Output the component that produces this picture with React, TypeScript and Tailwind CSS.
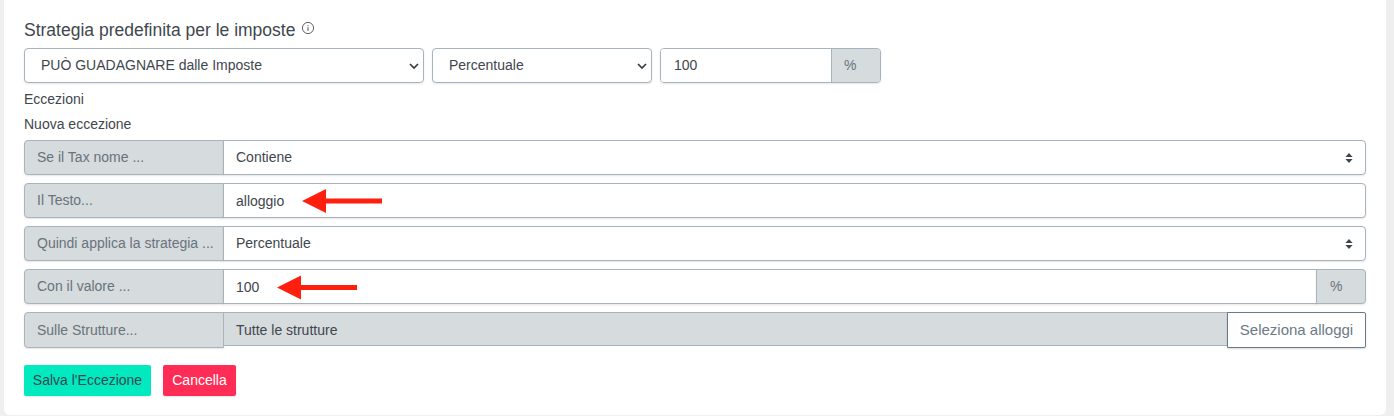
const sans = "font-['Liberation_Sans',Arial,sans-serif]";

function Chevron() {
  return (
    <svg viewBox="0 0 10 6" className="h-[6px] w-[10px]" aria-hidden>
      <path d="M1 1l4 4 4-4" fill="none" stroke="#343a40" strokeWidth="1.7" />
    </svg>
  );
}

function UpDown() {
  return (
    <svg viewBox="0 0 8 12" className="h-[12px] w-[8px]" aria-hidden>
      <path d="M4 1L7.6 5H0.4zM4 11L0.4 7h7.2z" fill="#3f464d" />
    </svg>
  );
}

function RedArrow({ className }: { className: string }) {
  return (
    <svg viewBox="0 0 80 24" className={className} aria-hidden>
      <path d="M0 12L24 0v9.5h56v5H24V24z" fill="#fe1f0e" />
    </svg>
  );
}

function TopSelect({ label, className }: { label: string; className: string }) {
  return (
    <div
      className={`flex h-[35px] items-center justify-between rounded-[4px] border border-[#a9b3bc] bg-white pl-[16px] pr-[4px] text-[14px] text-[#3f464d] shadow-[0_1px_2px_rgba(0,0,0,0.1)] ${className}`}
    >
      <span>{label}</span>
      <Chevron />
    </div>
  );
}

function Row({
  label,
  children,
  tall,
}: {
  label: string;
  children: React.ReactNode;
  tall?: boolean;
}) {
  return (
    <div className={`relative flex ${tall ? "h-[36px]" : "h-[35px]"}`}>
      <div className="flex w-[200px] shrink-0 items-center rounded-l-[4px] border border-[#a9b3bc] bg-[#d6dbde] pl-[12px] text-[14px] text-[#69737b] shadow-[0_1px_2px_rgba(0,0,0,0.1)]">
        {label}
      </div>
      {children}
    </div>
  );
}

function Field({ children }: { children: React.ReactNode }) {
  return (
    <div className="-ml-px flex min-w-0 flex-1 items-center justify-between rounded-r-[4px] border border-[#a9b3bc] bg-white pl-[12px] pr-[12px] text-[14px] text-[#3f464d] shadow-[0_1px_2px_rgba(0,0,0,0.1)]">
      {children}
    </div>
  );
}

export default function App() {
  return (
    <div className={`h-[416px] w-[1394px] overflow-hidden bg-[#efefef] pl-[4px] pr-[8px] ${sans}`}>
      <div className="h-[415px] rounded-b-[6px] bg-white pl-[20px] pr-[20px] pt-[20px]">
        <div className="flex h-[20px] items-center gap-[6px] text-[17.5px] text-[#3f464d]">
          <span>Strategia predefinita per le imposte</span>
          <svg viewBox="0 0 14 14" className="mb-[5px] h-[14px] w-[14px]" aria-hidden>
            <circle cx="7" cy="7" r="5.6" fill="none" stroke="#4b5259" strokeWidth="0.9" />
            <path d="M7 6.2v3.6M7 4.2v1" stroke="#4b5259" strokeWidth="1" />
          </svg>
        </div>

        <div className="mt-[8px] flex gap-[8px]">
          <TopSelect label="PUÒ GUADAGNARE dalle Imposte" className="w-[400px]" />
          <TopSelect label="Percentuale" className="w-[220px]" />
          <div className="flex h-[35px] w-[221px] overflow-hidden rounded-[4px] border border-[#a9b3bc] text-[14px] shadow-[0_1px_2px_rgba(0,0,0,0.1)]">
            <div className="flex flex-1 items-center bg-white pl-[13px] text-[#3f464d]">100</div>
            <div className="flex w-[49px] items-center border-l border-[#a9b3bc] bg-[#d6dbde] pl-[12px] text-[#69737b]">%</div>
          </div>
        </div>

        <div className="mt-[8px] h-[16px] text-[14px] leading-[16px] text-[#3f464d]">Eccezioni</div>
        <div className="mt-[9px] h-[16px] text-[14px] leading-[16px] text-[#3f464d]">Nuova eccezione</div>

        <div className="mt-[8px] flex flex-col gap-[8px]">
          <Row label="Se il Tax nome ...">
            <Field>
              <span>Contiene</span>
              <UpDown />
            </Field>
          </Row>
          <Row label="Il Testo...">
            <Field>
              <span className="pt-[2px]">alloggio</span>
            </Field>
            <RedArrow className="absolute left-[278px] top-[6px] h-[24px] w-[80px]" />
          </Row>
          <Row label="Quindi applica la strategia ...">
            <Field>
              <span>Percentuale</span>
              <UpDown />
            </Field>
          </Row>
          <Row label="Con il valore ...">
            <div className="-ml-px flex flex-1 items-center border border-[#a9b3bc] bg-white pl-[12px] pt-[2px] text-[14px] text-[#3f464d] shadow-[0_1px_2px_rgba(0,0,0,0.1)]">
              100
            </div>
            <div className="-ml-px flex w-[50px] items-center rounded-r-[4px] border border-[#a9b3bc] bg-[#d6dbde] pl-[13px] text-[14px] text-[#69737b] shadow-[0_1px_2px_rgba(0,0,0,0.1)]">
              %
            </div>
            <RedArrow className="absolute left-[253px] top-[6px] h-[25px] w-[80px]" />
          </Row>
          <Row label="Sulle Strutture..." tall>
            <div className="-ml-px flex h-[34px] flex-1 items-center border border-[#a9b3bc] bg-[#d6dbde] pl-[12px] pt-[2px] text-[14px] text-[#3f464d]">
              Tutte le strutture
            </div>
            <div className="-ml-px flex w-[139px] items-center justify-center rounded-r-[2px] border border-[#6c7a86] bg-white text-[15px] text-[#6c7a86] shadow-[0_1px_2px_rgba(0,0,0,0.15)]">
              Seleziona alloggi
            </div>
          </Row>
        </div>

        <div className="mt-[17px] flex gap-[12px]">
          <div className="flex h-[31px] w-[127px] items-center justify-center rounded-[2px] bg-[#00e9bf] text-[14px] text-[#37474f] shadow-[0_1px_2px_rgba(0,0,0,0.1)]">
            Salva l'Eccezione
          </div>
          <div className="flex h-[31px] w-[73px] items-center justify-center rounded-[2px] bg-[#ff2d55] text-[14px] text-white shadow-[0_1px_2px_rgba(0,0,0,0.1)]">
            Cancella
          </div>
        </div>
      </div>
    </div>
  );
}
